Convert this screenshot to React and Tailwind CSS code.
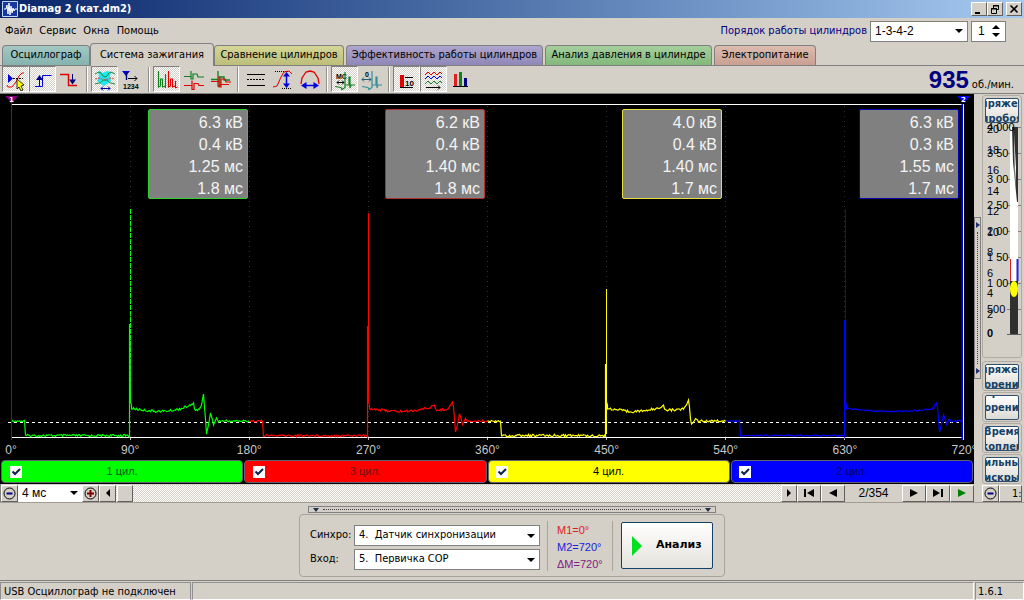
import { useState } from "react";

const CHECKER =
  "bg-[repeating-conic-gradient(#ffffff_0_25%,#d4d0c8_0_50%)] bg-[length:2px_2px]";
const RAISED =
  "bg-[#d4d0c8] border border-t-white border-l-white border-r-[#606060] border-b-[#606060]";

const TABS = [
  { name: "Осциллограф", fill: "bg-linear-to-b from-[#a3c8c4] to-[#85b3ae]", size: "w-[88px]" },
  { name: "Система зажигания", active: true, fill: "bg-[#d4d0c8]", size: "w-[124px]" },
  { name: "Сравнение цилиндров", fill: "bg-linear-to-b from-[#d5d698] to-[#bcbe79]", size: "w-[130px]" },
  { name: "Эффективность работы цилиндров", fill: "bg-linear-to-b from-[#aea6cf] to-[#8f87b6]", size: "w-[197px]" },
  { name: "Анализ давления в цилиндре", fill: "bg-linear-to-b from-[#a6cf9e] to-[#83b87b]", size: "w-[167px]" },
  { name: "Электропитание", fill: "bg-linear-to-b from-[#dcbcb0] to-[#c8a091]", size: "w-[102px]" },
];

const CYLINDERS = [
  { name: "1 цил.", color: "#00ff00", border: "border-[#30d030]", fill: "bg-[#00ff00]", text: "text-[#105010]", values: ["6.3 кВ", "0.4 кВ", "1.25 мс", "1.8 мс"] },
  { name: "3 цил.", color: "#ff0000", border: "border-[#b03030]", fill: "bg-[#ff0000]", text: "text-[#701010]", values: ["6.2 кВ", "0.4 кВ", "1.40 мс", "1.8 мс"] },
  { name: "4 цил.", color: "#ffff00", border: "border-[#e8e040]", fill: "bg-[#ffff00]", text: "text-black", values: ["4.0 кВ", "0.4 кВ", "1.40 мс", "1.7 мс"] },
  { name: "2 цил.", color: "#0000ff", border: "border-[#0000b0]", fill: "bg-[#0000ff]", text: "text-[#000070]", values: ["6.3 кВ", "0.3 кВ", "1.55 мс", "1.7 мс"] },
];

/* Trace shape per cylinder: start of window, spark position and height, end of burn. */
const TRACES = [
  { start: 11, spark: 129, top: 115, solid: 230, bump: 193, lift: 5, end: 203, peak: 300, dip: 340, ring: 1, noise: 2.2, last: 249, dash: "5 1" },
  { start: 249, spark: 367, top: 119, solid: 232, bump: 434, lift: 3, end: 452, peak: 308, dip: 338, ring: 0.9, noise: 2.2, last: 487, dash: "none" },
  { start: 487, spark: 605, top: 195, solid: 270, bump: 663, lift: 3, end: 688, peak: 306, dip: 330, ring: 0.3, noise: 2.6, last: 725, dash: "none" },
  { start: 726, spark: 844, top: 115, solid: 226, bump: 932, lift: 0, end: 936, peak: 309, dip: 338, ring: 0.8, noise: 1.2, last: 963, dash: "none" },
];

const jitter = (n, amp) => {
  const v = Math.sin(n * 12.9898) * 43758.5453;
  return (v - Math.floor(v) - 0.5) * amp;
};

function tracePoints(t) {
  const pts = [];
  for (let x = t.start; x < t.start + 14; x++) pts.push([x, 327 + jitter(x, 1.6)]);
  for (let x = t.start + 14; x < t.spark; x++) pts.push([x, 341.6 + jitter(x, t.noise)]);
  pts.push([t.spark, 343], [t.spark, t.solid], [t.spark + 1, 308], [t.spark + 2, 311], [t.spark + 2, 315]);
  const from = t.spark + 3;
  for (let x = from; x < t.bump; x++) {
    const k = (x - from) / (t.bump - from);
    pts.push([x, 314.5 + 3 * Math.sin(k * Math.PI) - (t.lift - 0.5) * k ** 4 + jitter(x, t.noise)]);
  }
  pts.push([t.bump, 314 - t.lift], [t.bump + 1, 315]);
  for (let x = t.bump + 2; x < t.end - 3; x++) {
    const k = (x - t.bump) / (t.end - t.bump);
    pts.push([x, 316 - 3 * k ** 3 + jitter(x, t.noise)]);
  }
  pts.push([t.end - 2, 311], [t.end, t.peak], [t.end + 1, 313], [t.end + 2, 325], [t.end + 3, t.dip], [t.end + 5, 327 + 4 * t.ring]);
  pts.push([t.end + 7, 327 - 8 * t.ring], [t.end + 9, 326], [t.end + 10, 327 + 4 * t.ring], [t.end + 13, 327 - 3 * t.ring], [t.end + 15, 328]);
  for (let x = t.end + 16; x <= t.last; x++) pts.push([x, 327 + jitter(x, 2)]);
  return pts.map(([x, y]) => `${x + 0.5},${y.toFixed(1)}`).join(" ");
}

function Plot() {
  return (
    <svg viewBox="0 0 974 346" preserveAspectRatio="none" className="block h-full w-full" fill="none" aria-label="Вторичное напряжение">
      {[130, 249, 368, 487, 606, 725, 844].map((x) => (
        <g key={x}>
          <path d={`M${x + 0.5} 12V344`} stroke="#303030" strokeDasharray="1 4" />
          <path d={`M${x + 0.5} 343V346`} stroke="#c0c0c0" />
        </g>
      ))}
      <path d="M11 10.5H964M11 343.5H964" stroke="#fff" />
      <path d="M8 328.5H964" stroke="#fff" strokeDasharray="3 3" />
      {TRACES.map((t, i) => (
        <g key={t.start} stroke={CYLINDERS[i].color}>
          <path d={`M${t.spark + 1.5} ${t.top}V${t.solid + 70}`} strokeDasharray={t.dash} />
          <polyline points={tracePoints(t)} strokeWidth="1.2" />
        </g>
      ))}
      <path d="M11.5 8V346" stroke="#800080" />
      <path d="M962.5 10V346" stroke="#0000ff" strokeWidth="2" />
      <path d="M963.5 10V346" stroke="#fff" />
      <path d="M5 2h13l-6 7z" fill="#800080" />
      <path d="M957 2h13l-6 7z" fill="#0000ff" />
      <text x="9" y="8" fill="#fff" fontSize="7" fontWeight="bold" fontFamily="DejaVu Sans">1</text>
      <text x="961" y="8" fill="#fff" fontSize="7" fontWeight="bold" fontFamily="DejaVu Sans">2</text>
    </svg>
  );
}

const ICONS = {
  cursor: (
    <>
      <path d="M4 18l1 2h4l4-5 3-6 3-3h2" stroke="#e00000" />
      <path d="M5 7v9l5-4.5z" fill="#0000e0" />
      <path d="M10 11.5h10" stroke="#000" strokeDasharray="2 1" />
      <path d="M14 12l7 6-3 1 2 4-2 1-2-4-2 2z" fill="#ff0" stroke="#000" strokeWidth="0.8" />
    </>
  ),
  rise: (
    <>
      <path d="M5 19.5h7.500v-11h9" stroke="#0000e0" />
      <path d="M9.500 19V9" stroke="#000080" />
      <path d="M6 13l3.500-5 3.500 5z" fill="#000080" />
    </>
  ),
  fall: (
    <>
      <path d="M3 7.500h8.500v11h8.500" stroke="#e00000" strokeWidth="1.4" />
      <path d="M15.500 7v8" stroke="#000080" />
      <path d="M12 12.500l3.500 5 3.500-5z" fill="#000080" />
    </>
  ),
  envelope: (
    <>
      <path d="M7 4l4 2 4-2 4 1-1 4 1 5-4 3-3 2-3-2-4-3 2-5-1-4z" fill="#20e8f0" />
      <path d="M3 7l4-2c3 0 3 5 6 5s3-5 6-5l4 2M3 17l4-1c3 0 2-3 6-3s3 3 6 3l4 1" stroke="#208030" />
      <path d="M3 12l4-1 6 2 6-2 4 1" stroke="#e04040" strokeDasharray="2 1" />
      <path d="M9 21.500h9M11 19.500l-2 2 2 2M16 19.500l2 2-2 2" stroke="#0000a0" />
    </>
  ),
  numbering: (
    <>
      <path d="M3 4h8l-4 5z" fill="#0000e0" />
      <path d="M7.500 5v8" stroke="#000080" strokeWidth="1.4" />
      <path d="M9 11.500h9M15.500 9l2.500 2.500-2.500 2.500" stroke="#000" />
      <text x="4" y="22" fontSize="7" fontWeight="bold" fontFamily="Liberation Sans" fill="#000">1234</text>
    </>
  ),
  parade: (
    <>
      <path d="M4.500 4v16l2-1v-7h2v8l3-1V7" stroke="#108020" strokeWidth="1.2" />
      <path d="M11.500 7v14" stroke="#108020" />
      <path d="M14.500 4v16l2-1v-7h2v8l3-1v-5" stroke="#e00000" strokeWidth="1.2" />
      <path d="M21.500 14v7l2-1" stroke="#e00000" />
    </>
  ),
  stacked: (
    <>
      <path d="M3 9.500h7V4v8h2V7h4l1 3h6" stroke="#108020" strokeWidth="1.2" />
      <path d="M3 18.500h8v-5 9h2v-6h4l1 2h5" stroke="#e00000" strokeWidth="1.2" />
    </>
  ),
  overlay: (
    <>
      <path d="M3 12.500h7V4v15h2v-9h4v3h6" stroke="#108020" strokeWidth="1.3" />
      <path d="M3 14.500h8V9v11h2v-8h4l1 3h5M12 17.500h9" stroke="#e00000" strokeWidth="1.2" />
    </>
  ),
  lines: (
    <>
      <path d="M4 7.500h18M4 18.500h18" stroke="#000" />
      <path d="M4 12.500h18" stroke="#000" strokeDasharray="2 1" />
    </>
  ),
  vertical: (
    <>
      <path d="M5 4.500h13M12 21.500h10" stroke="#000" strokeDasharray="1 1" />
      <path d="M3 20l4-1 4-9 3-5 5-1 3 3" stroke="#e00000" />
      <path d="M16.500 7v12" stroke="#0000e0" strokeWidth="1.500" />
      <path d="M13 9.500L16.500 5 20 9.500zM13 16.500l3.500 4.500 3.500-4.500z" fill="#0000e0" />
    </>
  ),
  horizontal: (
    <>
      <path d="M4 17l1-6 4-6 4-1 4 1 4 6 1 6" stroke="#e00000" strokeWidth="1.3" />
      <path d="M6 18.500h14" stroke="#0000e0" strokeWidth="1.500" />
      <path d="M9.500 15L4 18.500 9.500 22zM16.500 15l5.500 3.500-5.500 3.500z" fill="#0000e0" />
    </>
  ),
  millis: (
    <>
      <text x="4" y="12" fontSize="7" fontWeight="bold" fontFamily="Liberation Sans" fill="#000">МС</text>
      <path d="M5 15.500h7M7 13.500l-2 2 2 2M10 13.500l2 2-2 2" stroke="#000" />
      <path d="M3 19.500l6 1 1 2 3-2V5v13h4v-8h1v11l1-3h4" stroke="#108020" strokeWidth="1.2" />
    </>
  ),
  degrees: (
    <>
      <text x="6" y="10" fontSize="7" fontWeight="bold" fontFamily="Liberation Sans" fill="#000">0</text>
      <path d="M3 12.500h9M5 10.500l-2 2 2 2M10 10.500l2 2-2 2" stroke="#206070" />
      <path d="M3 19.500l6 1 1 2 3-2V4v14h4v-8h1v11l1-3h4" stroke="#309098" strokeWidth="1.2" />
    </>
  ),
  average: (
    <>
      <path d="M6 8h4v12H6z" fill="#e00000" />
      <path d="M11 10.500h8M6 20.500h13" stroke="#000" />
      <text x="11" y="19" fontSize="8" fontWeight="bold" fontFamily="Liberation Sans" fill="#000">10</text>
    </>
  ),
  waves: (
    <>
      <path d="M4 8l3-3 3 3 3-3 3 3 3-3 2 2" stroke="#e00000" />
      <path d="M4 12l3-3 3 3 3-3 3 3 3-3 2 2" stroke="#0000e0" />
      <path d="M4 17l3-3 3 3 3-3 3 3 3-3 2 2" stroke="#108020" />
      <path d="M5 20.500h14M17 18.500l2 2-2 2" stroke="#000" />
    </>
  ),
  bars: (
    <>
      <path d="M6 7h3v12H6z" fill="#e02020" />
      <path d="M11 5h3v14h-3z" fill="#108020" />
      <path d="M16 11h3v8h-3z" fill="#000080" />
      <path d="M5 19.500h15" stroke="#000" />
    </>
  ),
};

const TOOLS = [
  [["cursor", "Маркеры", true], ["rise", "Передний фронт", true], ["fall", "Задний фронт"]],
  [["envelope", "Наложение", true], ["numbering", "Нумерация"]],
  [["parade", "Парад", true], ["stacked", "Растр"], ["overlay", "Совмещение"]],
  [["lines", "Линии"], ["vertical", "Масштаб по вертикали"], ["horizontal", "Масштаб по горизонтали"]],
  [["millis", "Миллисекунды", true], ["degrees", "Градусы"]],
  [["average", "Среднее", true], ["waves", "Кадры", true], ["bars", "Гистограмма"]],
];

function Toolbar() {
  return (
    <div className="flex h-[28px] shrink-0 items-start border-b border-[#808080] pl-0.5">
      {TOOLS.map((group, i) => (
        <div key={i} className="flex items-center">
          {i > 0 && <span className="mx-[3px] h-[25px] w-0.5 border-x border-l-[#909090] border-r-white" />}
          {group.map(([icon, label, on]) => (
            <button
              key={icon}
              type="button"
              aria-label={label}
              aria-pressed={Boolean(on)}
              className={`flex h-[26px] w-[27px] items-center justify-center border ${on ? `${CHECKER} border-t-[#808080] border-l-[#808080] border-r-white border-b-white` : "border-transparent"}`}
            >
              <svg viewBox="0 0 25 24" className="h-[24px] w-[25px] shrink-0" fill="none">{ICONS[icon]}</svg>
            </button>
          ))}
        </div>
      ))}
      <div className="ml-auto flex items-baseline gap-[3px] pr-[10px] leading-[27px]">
        <span className="font-['Liberation_Sans'] text-[24px] font-bold text-[#000080]">935</span>
        <span className="text-[11px]">об./мин.</span>
      </div>
    </div>
  );
}

function Select({ label, id, options, className, hideLabel }) {
  return (
    <>
      <label htmlFor={id} className={hideLabel ? "sr-only" : ""}>{label}</label>
      <span className={`relative block ${className}`}>
        <select id={id} className="h-full w-full appearance-none border-none bg-transparent pl-1 outline-none">
          {options.map((o) => <option key={o}>{o}</option>)}
        </select>
        <svg viewBox="0 0 8 4" className="pointer-events-none absolute top-1/2 right-1 h-1 w-2 -translate-y-1/2"><path d="M0 0h8L4 4z" fill="#000" /></svg>
      </span>
    </>
  );
}

function WindowButton({ label, children }) {
  return (
    <button type="button" aria-label={label} className={`${RAISED} flex h-[14px] w-[16px] items-center justify-center`}>
      <svg viewBox="0 0 12 11" className="h-[11px] w-[12px] shrink-0" fill="none" stroke="#000">{children}</svg>
    </button>
  );
}

function Header() {
  return (
    <header>
      <div className="flex h-[18px] items-center bg-linear-to-r from-[#0a246a] to-[#a6caf0] px-0.5">
        <svg viewBox="0 0 16 16" className="h-4 w-4" fill="none">
          <path d="M0.500 0.500h15v15H0.500z" fill="#1838a0" stroke="#c0d8ff" />
          <path d="M2 8h2l1-4 1 9 1-11 1 12 1-9 1 7 1-5 1 3 1-2h2" stroke="#fff" />
        </svg>
        <h1 className="ml-px font-['DejaVu_Sans_Condensed'] text-[11px] font-bold text-white">Diamag 2 (кат.dm2)</h1>
        <div className="ml-auto flex">
          <WindowButton label="Свернуть"><path d="M2 9h5" strokeWidth="2" /></WindowButton>
          <WindowButton label="Восстановить"><path d="M4 1.500h5.500v4H8M4.500 1v3M2.500 4.500h5v5h-5zM2 5h6M4 2h6" /></WindowButton>
          <span className="w-[3px]" />
          <WindowButton label="Закрыть"><path d="M2.500 1.500l7 7M9.500 1.500l-7 7" strokeWidth="1.600" /></WindowButton>
        </div>
      </div>
      <div className="flex h-[26px] items-center pr-[18px] pl-[5px]">
        <nav className="flex gap-[7px]">
          {["Файл", "Сервис", "Окна", "Помощь"].map((m) => <button key={m} type="button">{m}</button>)}
        </nav>
        <div className="ml-auto flex items-center gap-[3px] text-[#000080]">
          <Select label="Порядок работы цилиндров" id="order" options={["1-3-4-2"]} className="h-[21px] w-[98px] border border-[#808080] bg-white font-['Liberation_Sans'] text-[12px] text-black" />
          <div className="flex h-[21px] w-[35px] items-center border border-[#808080] bg-white font-['Liberation_Sans'] text-[12px] text-black">
            <input aria-label="Номер цилиндра" defaultValue="1" className="w-5 bg-transparent pl-1.5 outline-none" />
            <div className="flex flex-col gap-1">
              <button type="button" aria-label="Больше"><svg viewBox="0 0 8 4" className="block h-1 w-2"><path d="M0 4h8L4 0z" /></svg></button>
              <button type="button" aria-label="Меньше"><svg viewBox="0 0 8 4" className="block h-1 w-2"><path d="M0 0h8L4 4z" /></svg></button>
            </div>
          </div>
        </div>
      </div>
      <div role="tablist" className="flex h-[22px] items-end border-b border-[#808080] pl-0.5">
        {TABS.map((t) => (
          <button
            key={t.name}
            type="button"
            role="tab"
            aria-selected={Boolean(t.active)}
            className={`${t.size} ${t.fill} shrink-0 rounded-t-[4px] border border-b-0 border-[#808080] whitespace-nowrap ${t.active ? "-mb-px h-[23px]" : "h-[20px] not-first:mr-[2px]"}`}
          >
            {t.name}
          </button>
        ))}
      </div>
    </header>
  );
}

function NavButton({ label, d, fill = "#000", size = "w-[24px]" }) {
  return (
    <button type="button" aria-label={label} className={`${RAISED} ${size} flex h-[17px] shrink-0 items-center justify-center`}>
      <svg viewBox="0 0 12 8" className="h-2 w-3 shrink-0"><path d={d} fill={fill} /></svg>
    </button>
  );
}

function ZoomButton({ label, plus }) {
  return (
    <button type="button" aria-label={label} className={`${RAISED} flex h-[17px] w-[17px] shrink-0 items-center justify-center`}>
      <svg viewBox="0 0 13 13" className="h-[13px] w-[13px] shrink-0" fill="none">
        <circle cx="6.5" cy="6.5" r="5.500" stroke="#000" />
        <path d={plus ? "M3 6.500h7M6.500 3v7" : "M3.500 6.500h6"} stroke={plus ? "#800000" : "#000080"} strokeWidth="2" />
      </svg>
    </button>
  );
}

function Scope() {
  const [visible, setVisible] = useState([true, true, true, true]);
  const degrees = [0, 90, 180, 270, 360, 450, 540, 630, 720];
  return (
    <section className="flex min-w-0 flex-1 flex-col overflow-hidden bg-black font-['Liberation_Sans',sans-serif]">
      <div className="relative min-h-[346px] flex-1">
        <div className="absolute inset-0"><Plot /></div>
        <div className="absolute top-[15px] right-[15px] left-[11px] grid grid-cols-4">
          {CYLINDERS.map((c) => (
            <ul key={c.name} className={`${c.border} h-[90px] w-[100px] justify-self-end rounded-[2px] border bg-[#808080] px-1 pt-[2px] text-right text-[16px] leading-[22px] text-[#f4f4f4]`}>
              {c.values.map((v, i) => <li key={i}>{v}</li>)}
            </ul>
          ))}
        </div>
      </div>
      <div className="flex h-[20px] shrink-0 justify-between pr-[10px] pl-[11px] text-[12px] leading-[20px] text-[#c8c8c8]">
        {degrees.map((d) => <span key={d} className="flex w-0 justify-center"><span>{d}°</span></span>)}
      </div>
      <div className="grid shrink-0 grid-cols-4 gap-px px-px pb-px">
        {CYLINDERS.map((c, i) => (
          <label key={c.name} className={`${c.fill} ${c.text} flex h-[23px] items-center rounded-[4px] border border-[#606070] pl-[7px] text-[11px]`}>
            <span className="grid h-[13px] w-[13px] place-items-center">
              <input
                type="checkbox"
                checked={visible[i]}
                onChange={() => setVisible(visible.map((v, k) => (k === i ? !v : v)))}
                className="peer col-start-1 row-start-1 h-[12px] w-[12px] appearance-none bg-white"
              />
              <svg viewBox="0 0 10 10" className="pointer-events-none col-start-1 row-start-1 hidden h-[10px] w-[10px] peer-checked:block" fill="none"><path d="M1.500 4.500L4 7l5-5" stroke="#102050" strokeWidth="2" /></svg>
            </span>
            <span className="flex-1 pr-5 text-center">{c.name}</span>
          </label>
        ))}
      </div>
      <div className="flex h-[18px] shrink-0 items-center border-l border-[#808080] bg-[#d4d0c8] text-[12px]">
        <ZoomButton label="Сжать" />
        <Select hideLabel label="Развёртка" id="sweep" options={["4 мс"]} className="h-[17px] w-[64px] shrink-0 bg-white leading-[16px]" />
        <ZoomButton label="Растянуть" plus />
        <NavButton label="Прокрутка влево" size="w-[17px]" d="M8 0v8L4 4z" />
        <div className={`${CHECKER} h-[17px] flex-1 pl-px`}><div className={`${RAISED} h-[17px] w-[16px]`} /></div>
        <NavButton label="Прокрутка вправо" size="w-[16px]" d="M4 0v8l4-4z" />
        <NavButton label="В начало" d="M1 0h2v8H1zM11 0v8L4 4z" />
        <NavButton label="Назад" d="M10 0v8L2 4z" />
        <output className="w-[57px] text-center">2/354</output>
        <NavButton label="Вперёд" d="M2 0v8l8-4z" />
        <NavButton label="В конец" d="M1 0v8l7-4zM9 0h2v8H9z" />
        <NavButton label="Пуск" d="M2 0v8l8-4z" fill="#008000" />
      </div>
    </section>
  );
}

function Gauge() {
  return (
    <svg viewBox="0 0 37 214" className="block h-[214px] w-[37px]" fontFamily="Liberation Sans" fontSize="11">
      <path d="M25 4h8v208h-8z" fill="#303030" />
      <path d="M25 4h2l1 35 2 20 2 20h1v79h-8z" fill="#fff" />
      <path d="M29 10l1 55 1-20z" fill="#fff" />
      <path d="M25.500 136v22" stroke="#e02020" />
      <path d="M32.500 136v22" stroke="#2020e0" strokeWidth="2" />
      <ellipse cx="29" cy="166" rx="4" ry="8" fill="#ff0" />
      {["4 000", "3 50", "3 00", "2 50", "2 00", "1 50", "1 00", "500"].map((v, i) => (
        <g key={v}>
          <path d={`M22 ${4.5 + i * 26}h3M33 ${4.5 + i * 26}h3`} stroke="#808080" />
          <text x="2" y={8 + i * 26}>{v}</text>
        </g>
      ))}
      {[20, 18, 16, 14, 12, 10, 8, 6, 4, 2].map((v, i) => (
        <text key={v} x="2" y={10 + Math.round(i * 20.5)}>{v}</text>
      ))}
      <path d="M22 211.500h14" stroke="#606060" />
      <text x="2" y="214" fontWeight="bold">0</text>
    </svg>
  );
}

function SideButton({ lines }) {
  return (
    <button type="button" className="flex h-[25px] w-full flex-col items-center justify-center overflow-hidden rounded-[2px] border border-[#305070] bg-linear-to-b from-white to-[#dcdad4] text-[11px] leading-[15px] font-bold text-[#153f66]">
      {lines.map((l, i) => <span key={i} className="block h-[15px] w-[120px] shrink-0 text-center">{l}</span>)}
    </button>
  );
}

function SidePanel() {
  const frame = "overflow-hidden rounded-[3px] border border-[#b0aca4] p-0.5";
  return (
    <aside className="flex w-[42px] shrink-0 flex-col pr-[2px]">
      <div className={`${frame} mt-px h-[263px]`}>
        <SideButton lines={["Напряжение", "пробоя"]} />
        <Gauge />
      </div>
      <div className="mt-[3px] flex flex-col gap-px">
        {[["Напряжение", "горения"], ["Время", "горения", ""], ["Время", "накопления"], ["Сильные", "искры"]].map((l, i) => (
          <div key={i} className={`${frame} h-[30px]`}><SideButton lines={l} /></div>
        ))}
      </div>
      <div className="mt-auto flex h-[18px] items-center overflow-hidden">
        <ZoomButton label="Уменьшить" />
        <output className={`${RAISED} flex-1 overflow-hidden pl-3 leading-[15px] whitespace-nowrap`}>1:1</output>
      </div>
    </aside>
  );
}

function Splitter() {
  return (
    <div className="flex w-[8px] shrink-0 flex-col pt-[123px]">
      <div className="flex h-[162px] w-[7px] flex-col items-center justify-between border border-[#808080] py-1">
        <svg viewBox="0 0 4 6" className="h-1.5 w-1"><path d="M0 0l4 3-4 3z" fill="#203070" /></svg>
        <span className="my-1 w-0 flex-1 border-l border-dotted border-[#404040]" />
        <svg viewBox="0 0 4 6" className="h-1.5 w-1"><path d="M0 0l4 3-4 3z" fill="#203070" /></svg>
      </div>
    </div>
  );
}

function SyncPanel() {
  const box = "h-[21px] w-[186px] border border-[#808080] bg-white";
  return (
    <section className="flex h-[78px] shrink-0 flex-col items-center border-t border-[#a09c94] pt-[3px]">
      <div className="flex h-[7px] w-[408px] items-center gap-1 border border-[#808080] px-1">
        <svg viewBox="0 0 6 4" className="h-1 w-1.5"><path d="M0 0h6L3 4z" fill="#203050" /></svg>
        <span className="h-0 flex-1 border-t border-dotted border-[#404040]" />
        <svg viewBox="0 0 6 4" className="h-1 w-1.5"><path d="M0 0h6L3 4z" fill="#203050" /></svg>
      </div>
      <div className="mt-px flex h-[63px] w-[426px] items-center rounded-[4px] border border-[#a8a49c] px-[10px]">
        <div className="mt-1 grid grid-cols-[44px_186px] items-center gap-y-[3px]">
          <Select label="Синхро:" id="sync" options={["4.\u00a0 Датчик синхронизации"]} className={box} />
          <Select label="Вход:" id="input" options={["5.\u00a0 Первичка COP"]} className={box} />
        </div>
        <div className="ml-[7px] flex h-[50px] w-[66px] flex-col border-x border-[#a8a49c] pt-px pl-[9px] font-['Liberation_Sans',sans-serif] leading-[17px]">
          <span className="text-[#e02020]">М1=0°</span>
          <span className="text-[#2020e0]">М2=720°</span>
          <span className="text-[#802080]">ΔМ=720°</span>
        </div>
        <button type="button" className="ml-[8px] flex h-[47px] w-[92px] items-center gap-[14px] rounded-[2px] border border-[#153f66] bg-linear-to-b from-white to-[#e4e2dc] pl-[9px] font-['DejaVu_Sans'] font-bold">
          <svg viewBox="0 0 11 20" className="h-5 w-[11px]"><path d="M1 0v20l10-10z" fill="#00e020" /></svg>
          Анализ
        </button>
      </div>
    </section>
  );
}

export default function App() {
  return (
    <div className="flex min-h-screen flex-col overflow-hidden bg-[#d4d0c8] font-['DejaVu_Sans_Condensed','Noto_Sans',sans-serif] text-[11px] text-black">
      <Header />
      <Toolbar />
      <main className="flex flex-1">
        <Scope />
        <Splitter />
        <SidePanel />
      </main>
      <SyncPanel />
      <footer className="flex h-[20px] shrink-0 border-t border-[#808080] pt-px leading-[18px]">
        <span className="w-[191px] border border-t-[#909090] border-r-[#909090] border-b-white border-l-[#909090] pl-[3px]">USB Осциллограф не подключен</span>
        <span className="ml-px flex-1 border border-t-[#909090] border-r-white border-b-white border-l-[#909090]" />
        <span className="ml-px w-[49px] border border-t-[#909090] border-r-white border-b-white border-l-[#909090] pl-0.5">1.6.1</span>
      </footer>
    </div>
  );
}
